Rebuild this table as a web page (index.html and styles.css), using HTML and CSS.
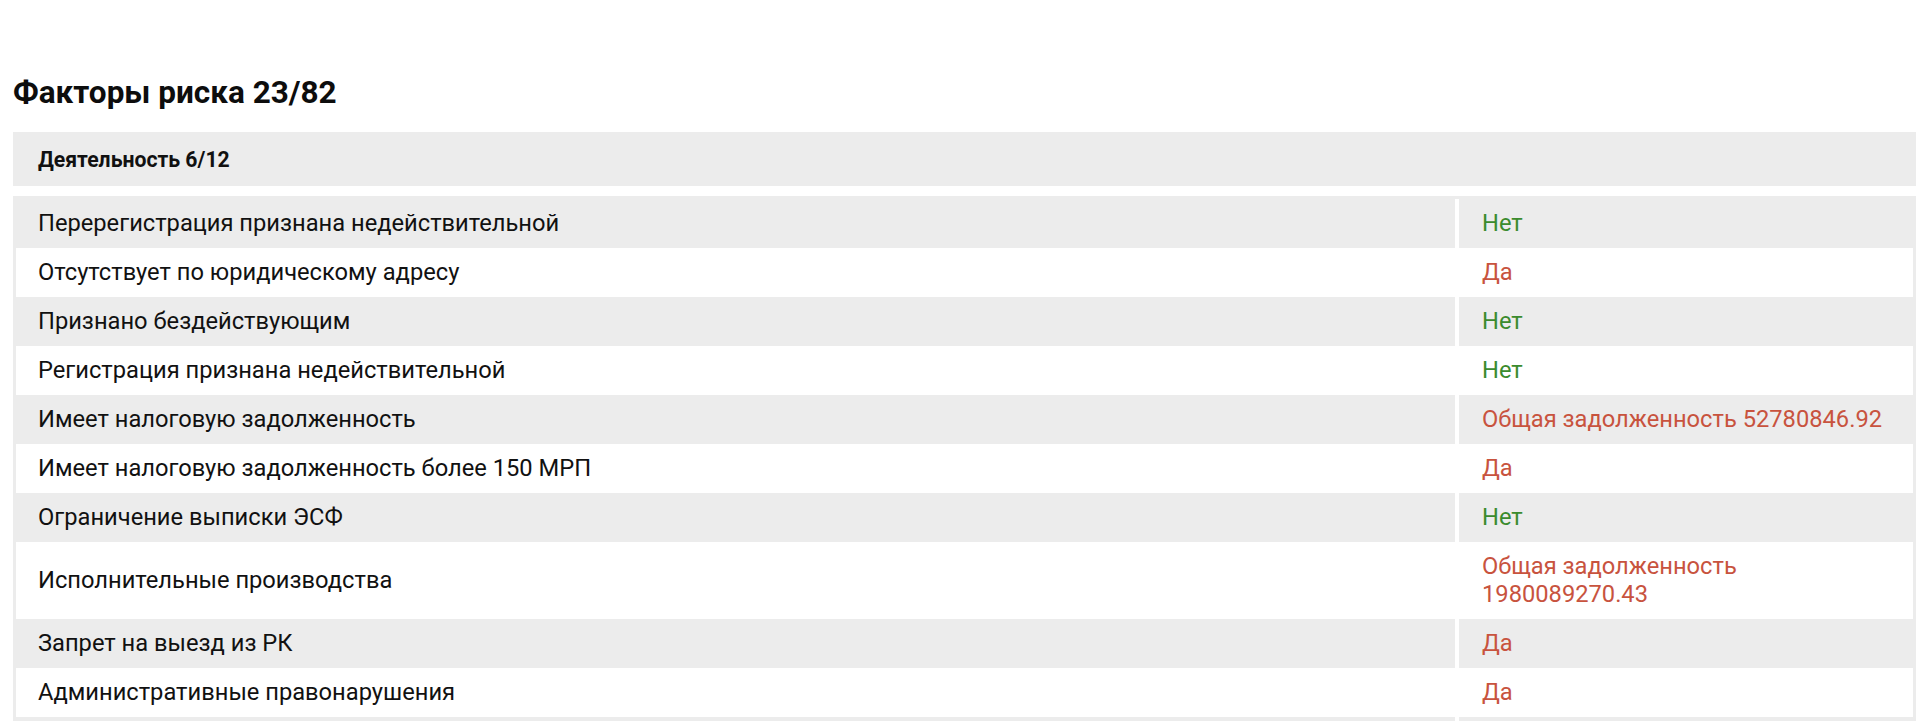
FILE: index.html
```html
<!DOCTYPE html>
<html lang="ru">
<head>
<meta charset="utf-8">
<title>Факторы риска</title>
<link rel="stylesheet" href="styles.css">
</head>
<body>
<div class="page">
  <h2 class="title">Факторы риска 23/82</h2>
  <div class="group-head">Деятельность 6/12</div>
  <div class="table">
    <div class="row gray"><div class="label">Перерегистрация признана недействительной</div><div class="value ok">Нет</div></div>
    <div class="row white"><div class="label">Отсутствует по юридическому адресу</div><div class="value bad">Да</div></div>
    <div class="row gray"><div class="label">Признано бездействующим</div><div class="value ok">Нет</div></div>
    <div class="row white"><div class="label">Регистрация признана недействительной</div><div class="value ok">Нет</div></div>
    <div class="row gray"><div class="label">Имеет налоговую задолженность</div><div class="value bad">Общая задолженность 52780846.92</div></div>
    <div class="row white"><div class="label">Имеет налоговую задолженность более 150 МРП</div><div class="value bad">Да</div></div>
    <div class="row gray"><div class="label">Ограничение выписки ЭСФ</div><div class="value ok">Нет</div></div>
    <div class="row white"><div class="label">Исполнительные производства</div><div class="value bad">Общая задолженность 1980089270.43</div></div>
    <div class="row gray"><div class="label">Запрет на выезд из РК</div><div class="value bad">Да</div></div>
    <div class="row white"><div class="label">Административные правонарушения</div><div class="value bad">Да</div></div>
    <div class="row gray"><div class="label"></div><div class="value"></div></div>
  </div>
</div>
</body>
</html>
```
FILE: styles.css
```css
html, body {
  margin: 0;
  padding: 0;
  background: #ffffff;
}
body {
  font-family: Roboto, "Noto Sans", "Liberation Sans", sans-serif;
  color: #111111;
}
.page {
  padding: 75px 4px 0 13px;
}
.title {
  margin: 0 0 21px 0;
  font-size: 31.5px;
  line-height: 36px;
  font-weight: 700;
  color: #0d0d0d;
}
.group-head {
  background: #ececec;
  font-size: 21.2px;
  font-weight: 700;
  line-height: 28px;
  padding: 14px 24px 12px 25px;
  margin-bottom: 10px;
}
.table {
  background: #ececec;
  padding: 3px;
}
.row {
  display: grid;
  grid-template-columns: 1439px 1fr;
  font-size: 23.7px;
  line-height: 28px;
}
.row.white {
  background: #ffffff;
}
.label,
.value {
  display: flex;
  align-items: center;
  min-height: 28px;
}
.label {
  padding: 10px 22px 11px 22px;
}
.value {
  padding: 10px 22px 11px 23px;
  border-left: 4px solid #ffffff;
}
.ok {
  color: #3b8b2e;
}
.bad {
  color: #c8533e;
}
```
